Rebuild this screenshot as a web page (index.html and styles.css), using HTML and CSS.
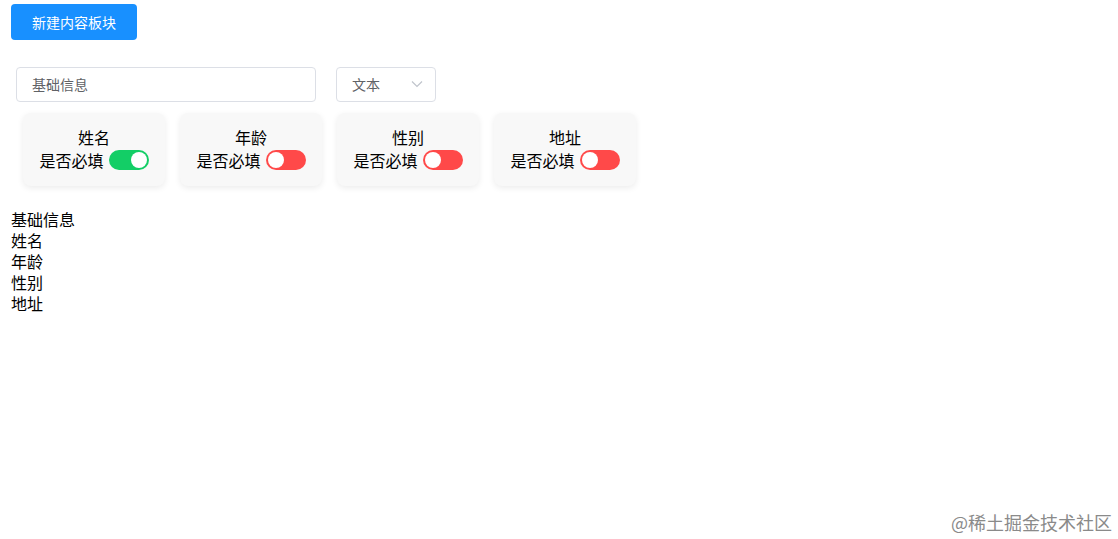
FILE: index.html
```html
<!DOCTYPE html>
<html lang="zh-CN">

<head>
    <meta charset="UTF-8">
    <meta name="viewport" content="width=device-width, initial-scale=1.0">
    <title>内容板块</title>
    <link rel="stylesheet" href="styles.css">
</head>

<body>
    <div class="page">
        <button class="btn-add">新建内容板块</button>

        <div class="block">
            <div class="block-head">
                <div class="input-box">基础信息</div>
                <div class="select-box">
                    <span>文本</span>
                    <svg class="arrow" width="12" height="8" viewBox="0 0 12 8">
                        <path d="M1 1.5 L6 6.5 L11 1.5" fill="none" stroke="#c0c4cc" stroke-width="1.2" />
                    </svg>
                </div>
            </div>

            <div class="cards">
                <div class="card">
                    <p class="card-title">姓名</p>
                    <p class="card-row">是否必填 <span class="switch on"></span></p>
                </div>
                <div class="card">
                    <p class="card-title">年龄</p>
                    <p class="card-row">是否必填 <span class="switch"></span></p>
                </div>
                <div class="card">
                    <p class="card-title">性别</p>
                    <p class="card-row">是否必填 <span class="switch"></span></p>
                </div>
                <div class="card">
                    <p class="card-title">地址</p>
                    <p class="card-row">是否必填 <span class="switch"></span></p>
                </div>
            </div>
        </div>

        <div class="preview">
            <p>基础信息</p>
            <p>姓名</p>
            <p>年龄</p>
            <p>性别</p>
            <p>地址</p>
        </div>
    </div>

    <div class="watermark">@稀土掘金技术社区</div>
</body>

</html>
```

FILE: styles.css
```css
* {
    margin: 0;
    padding: 0;
    box-sizing: border-box;
}

body {
    font-family: "Noto Sans CJK SC", "Noto Sans", sans-serif;
    font-size: 16px;
    color: #000;
    background: #fff;
}

.page {
    padding: 4px 11px;
}

.btn-add {
    display: block;
    width: 126px;
    height: 36px;
    border: none;
    border-radius: 4px;
    background: #1890ff;
    color: #fff;
    font-family: inherit;
    font-size: 14px;
}

.block {
    padding: 27px 5px 0;
}

.block-head {
    display: flex;
    gap: 20px;
}

.input-box,
.select-box {
    height: 35px;
    border: 1px solid #dcdfe6;
    border-radius: 4px;
    font-size: 14px;
    color: #606266;
    display: flex;
    align-items: center;
    padding: 0 15px 1px;
}

.input-box {
    width: 300px;
}

.select-box {
    width: 100px;
    justify-content: space-between;
    padding-right: 12px;
}

.cards {
    display: flex;
    gap: 15px;
    padding: 11px 7px 0;
}

.card {
    width: 142px;
    height: 73px;
    padding-top: 13px;
    background: #f8f8f8;
    border-radius: 8px;
    box-shadow: 0 2px 6px rgba(0, 0, 0, 0.08);
    text-align: center;
}

.card-title {
    line-height: 22px;
}

.card-row {
    display: flex;
    justify-content: center;
    align-items: center;
    gap: 5px;
    line-height: 22px;
    margin-top: 1px;
}

.switch {
    position: relative;
    display: inline-block;
    width: 40px;
    height: 20px;
    border-radius: 10px;
    background: #ff4949;
}

.switch::after {
    content: "";
    position: absolute;
    top: 2px;
    left: 2px;
    width: 16px;
    height: 16px;
    border-radius: 50%;
    background: #fff;
}

.switch.on {
    background: #13ce66;
}

.switch.on::after {
    left: 22px;
}

.preview {
    padding-top: 23px;
}

.preview p {
    line-height: 21px;
}

.watermark {
    position: absolute;
    right: 6px;
    bottom: 4px;
    font-size: 18px;
    color: #8a8a8a;
}
```
